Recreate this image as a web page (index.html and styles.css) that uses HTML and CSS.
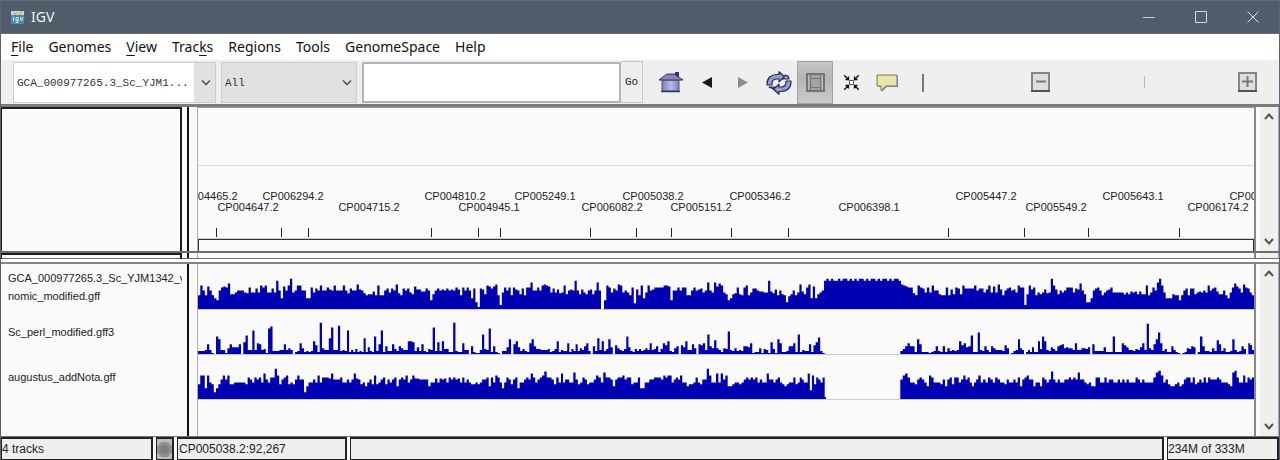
FILE: index.html
```html
<!DOCTYPE html>
<html lang="en">
<head>
<meta charset="utf-8">
<title>IGV</title>
<link rel="stylesheet" href="styles.css">
</head>
<body>
<div class="window">
  <header class="titlebar">
    <svg class="app-icon" width="13" height="13" viewBox="0 0 13 13"><rect width="13" height="13" fill="#4b8da3"/><rect width="13" height="4" fill="#c7dcd3"/><path d="M1 1h2M5 2h2M9 1h3" stroke="#d9a05b"/><path d="M3 3h2M8 3h2" stroke="#5aa070"/><path d="M2.500 6v4M5 6.500h2v3H5zM7 9v2.500H4.500M9 6l1.500 4L12 6" fill="none" stroke="#d5e8ee"/></svg>
    <span class="app-name">IGV</span>
    <div class="window-buttons">
      <button aria-label="Minimize"><svg width="12" height="12" viewBox="0 0 12 12"><path d="M0 6.500h12" stroke="#c3c9cf"/></svg></button>
      <button aria-label="Maximize"><svg width="12" height="12" viewBox="0 0 12 12"><path d="M.5.5h11v11H.5z" fill="none" stroke="#d5d9dd"/></svg></button>
      <button aria-label="Close"><svg width="12" height="12" viewBox="0 0 12 12"><path d="M.5.5l11 11M11.500.5l-11 11" stroke="#dfe2e5"/></svg></button>
    </div>
  </header>
  <nav class="menubar">
    <button><u>F</u>ile</button><button>Genomes</button><button><u>V</u>iew</button><button>Trac<u>k</u>s</button><button>Regions</button><button>Tools</button><button>GenomeSpace</button><button>Help</button>
  </nav>
  <div class="toolbar">
    <div class="combo genome"><select aria-label="Genome"><option>GCA_000977265.3_Sc_YJM1...</option></select><svg class="chevron" width="10" height="6" viewBox="0 0 10 6"><path d="M1 .5l4 4 4-4" fill="none" stroke="#444" stroke-width="1.300"/></svg></div>
    <div class="combo chromosome"><select aria-label="Chromosome"><option>All</option></select><svg class="chevron" width="10" height="6" viewBox="0 0 10 6"><path d="M1 .5l4 4 4-4" fill="none" stroke="#444" stroke-width="1.300"/></svg></div>
    <input class="locus" type="text" aria-label="Locus">
    <button class="go">Go</button>
    <div class="tools">
      <button aria-label="Home"><svg width="26" height="22" viewBox="0 0 26 22"><defs><linearGradient id="wall" x2="1"><stop stop-color="#7c7cb6"/><stop offset=".5" stop-color="#b9b9e6"/><stop offset="1" stop-color="#8080b8"/></linearGradient></defs><path d="M4 8h17v11H4z" fill="url(#wall)" stroke="#55558c"/><path d="M17 0h4v5h-4z" fill="#33336b"/><path d="M1 8L9 2h7l9 6z" fill="#8585bd" stroke="#33335f"/><path d="M3 19.500h19" stroke="#33335f" stroke-width="1.500"/></svg></button>
      <button aria-label="Back"><svg width="10" height="11" viewBox="0 0 10 11"><path d="M0 5.500L10 0v11z" fill="#1a1a1a"/></svg></button>
      <button aria-label="Forward"><svg width="10" height="11" viewBox="0 0 10 11"><path d="M10 5.500L0 0v11z" fill="#8c8c8c"/></svg></button>
      <button aria-label="Refresh"><svg width="26" height="24" viewBox="0 0 26 24"><g fill="#9a9ad2" stroke="#26264f" stroke-width="1.200" stroke-linejoin="round"><path d="M1 13C1 7 5 3.500 11 3.500h2V.8l5.500 5L13 10.800V8h-2c-3 0-5 2-5 5v1H1z"/><path d="M25 11c0 6-4 9.500-10 9.500h-2v2.700l-5.500-5 5.500-5V16h2c3 0 5-2 5-5v-1h5z"/><path d="M3 16h6l-1.500 2zM17 8h6l-1-3-3-1z"/></g></svg></button>
      <button class="pressed" aria-label="Define a region" aria-pressed="true"><svg width="19" height="19" viewBox="0 0 19 19"><path d="M1 1h17v17H1z" fill="#a3a3a3" stroke="#737373" stroke-width="2"/><path d="M4.500 2v15M14.500 2v15M5 5.500h9M5 14.500h9" stroke="#777"/><path d="M2.500 2v15M16.500 2v15" stroke="#bbb"/></svg></button>
      <button aria-label="Fit to window"><svg width="15" height="15" viewBox="0 0 15 15"><path d="M5.500 5.500h4v4h-4z" fill="#fff" stroke="#555"/><path d="M0 0l5 5M15 0l-5 5M0 15l5-5M15 15l-5-5M1.500 4.500h3v-3M13.500 4.500h-3v-3M1.500 10.500h3v3M13.500 10.500h-3v3" fill="none" stroke="#111" stroke-width="1.300"/></svg></button>
      <button aria-label="Popup text"><svg width="23" height="18" viewBox="0 0 23 18"><path d="M2 2h20v11H11l-5 5v-5H2z" fill="#999"/><path d="M1 1h20v11H10l-5 4.500V12H1z" fill="#ece5ab" stroke="#77745e"/></svg></button>
      <button aria-label="Ruler"><svg width="2" height="18" viewBox="0 0 2 18"><path d="M0 0h2v18H0z" fill="#777"/></svg></button>
    </div>
    <div class="zoom">
      <button aria-label="Zoom out"><svg width="19" height="20" viewBox="0 0 19 20"><path d="M1 1h17v18H1z" fill="#dedede" stroke="#858585" stroke-width="2"/><path d="M0 19h19" stroke="#555" stroke-width="2"/><path d="M5 9.500h10" stroke="#777" stroke-width="2"/></svg></button>
      <span class="zoom-mark"></span>
      <button aria-label="Zoom in"><svg width="19" height="20" viewBox="0 0 19 20"><path d="M1 1h17v18H1z" fill="#dedede" stroke="#858585" stroke-width="2"/><path d="M0 19h19" stroke="#555" stroke-width="2"/><path d="M4 9.500h11M9.500 4v11" stroke="#777" stroke-width="2"/></svg></button>
    </div>
  </div>
  <main class="panels">
    <section class="panel header-panel">
      <div class="names boxed"></div>
      <div class="view">
        <div class="cytoband"></div>
        <svg class="ruler" id="ruler" width="100%" height="74"></svg>
        <div class="region-bar"></div>
      </div>
      <div class="scroll"><button aria-label="Scroll header up"><svg width="10" height="7" viewBox="0 0 10 7"><path d="M1 6l4-4.500L9 6" fill="none" stroke="#555" stroke-width="2"/></svg></button><button aria-label="Scroll header down"><svg width="10" height="7" viewBox="0 0 10 7"><path d="M1 1l4 4.500L9 1" fill="none" stroke="#555" stroke-width="2"/></svg></button></div>
    </section>
    <section class="panel strip">
      <div class="names boxed"></div><div class="view"></div><div class="scroll"></div>
    </section>
    <div class="splitter"></div>
    <section class="panel track-panel">
      <div class="names">
        <div class="name"><span>GCA_000977265.3_Sc_YJM1342_v1_ge</span><span>nomic_modified.gff</span></div>
        <div class="name"><span>Sc_perl_modified.gff3</span></div>
        <div class="name"><span>augustus_addNota.gff</span></div>
      </div>
      <div class="view">
        <svg class="track" viewBox="0 0 1056 45" preserveAspectRatio="none"></svg>
        <svg class="track" viewBox="0 0 1056 45" preserveAspectRatio="none"></svg>
        <svg class="track" viewBox="0 0 1056 45" preserveAspectRatio="none"></svg>
      </div>
      <div class="scroll"><button aria-label="Scroll tracks up"><svg width="10" height="7" viewBox="0 0 10 7"><path d="M1 6l4-4.500L9 6" fill="none" stroke="#555" stroke-width="2"/></svg></button><button aria-label="Scroll tracks down"><svg width="10" height="7" viewBox="0 0 10 7"><path d="M1 1l4 4.500L9 1" fill="none" stroke="#555" stroke-width="2"/></svg></button></div>
    </section>
  </main>
  <footer class="status">
    <div class="cell count">4 tracks</div>
    <div class="cell stop"><svg width="15" height="17" viewBox="0 0 17 17"><path d="M5 0h7l5 5v7l-5 5H5l-5-5V5z" fill="#8f8f8f"/><circle cx="8.500" cy="8.500" r="5" fill="#7d7d7d"/></svg></div>
    <div class="cell position">CP005038.2:92,267</div>
    <div class="cell message"></div>
    <div class="cell memory">234M of 333M</div>
  </footer>
</div>
<script src="tracks.js"></script>
</body>
</html>
```
FILE: styles.css
```css
* { box-sizing: border-box; }
body { margin: 0; font-family: "Liberation Sans", Arial, sans-serif; font-size: 12px; color: #222; }
button { border: 0; padding: 0; background: none; font: inherit; color: inherit; display: flex; align-items: center; justify-content: center; }
svg { display: block; flex: none; }

.window { min-height: 100vh; display: flex; flex-direction: column; background: #efefef; border: solid #5c6670; border-width: 0 1px; }
.titlebar { display: flex; align-items: center; height: 34px; padding-left: 10px; background: #505c6a; border-top: 1px solid #5f6b78; border-bottom: 1px solid #65707d; }
.app-name { margin-left: 7px; font: 14px/20px "Noto Sans", sans-serif; color: #f2f4f5; }
.window-buttons { display: flex; margin-left: auto; }
.window-buttons button { width: 52px; height: 32px; }

.menubar { display: flex; gap: 15px; height: 26px; padding-left: 10px; background: #fff; }
.menubar button { font: 14px/26px "Noto Sans", sans-serif; color: #111; display: block; }
.menubar u { text-underline-offset: 3px; }

.toolbar { display: flex; height: 44px; padding-left: 12px; background: #efefef; }
.combo { position: relative; height: 41px; margin-top: 2px; border: 1px solid #ccc; background: #e1e1e1; }
.combo select { appearance: none; width: 100%; height: 100%; border: 0; margin: 0; padding: 0 0 0 3px; background: transparent; font: 11px "Liberation Mono", monospace; color: #333; }
.chevron { position: absolute; right: 4px; top: 17px; pointer-events: none; }
.genome { width: 203px; margin-right: 5px; }
.genome select { width: 180px; background: #fff; }
.chromosome { width: 136px; margin-right: 5px; }
.locus { width: 259px; height: 41px; margin: 2px 0 0; padding: 2px 4px; border: 2px solid #b2b4ba; background: #fff; font: 11px "Liberation Mono", monospace; }
.go { width: 22px; height: 42px; margin-top: 1px; border: solid #c6c6c6; border-width: 1px 1px 1px 0; font: 11px "Liberation Mono", monospace; }
.tools { display: flex; margin-left: 10px; }
.tools button { width: 36px; height: 43px; margin-top: 1px; }
.tools .pressed { background: linear-gradient(#c6c6c6, #b6b6b6 40%, #cacaca); border: 1px solid #a2a2a2; }
.zoom { flex: 1; display: flex; align-items: center; justify-content: space-between; padding: 0 22px 0 90px; }
.zoom-mark { width: 1px; height: 12px; background: #bbb; }

.panels { flex: 1; display: flex; flex-direction: column; border-top: 3px solid #7b7b7b; background: #fafafa; }
.panel { display: flex; }
.names { width: 188px; flex: none; border-right: 2px solid #111; background: #fafafa; }
.boxed { padding-right: 5px; }
.boxed::before { content: ""; display: block; height: 100%; border: 2px solid #1c1c1c; border-left-width: 1px; }
.view { flex: 1; min-width: 0; margin-left: 8px; border: solid #888; border-width: 0 2px 0 1px; border-left-color: #b0b0b0; }
.scroll { width: 19px; flex: none; margin-left: 4px; background: #efefef; display: flex; flex-direction: column; justify-content: space-between; border-right: 1px solid #aaa; }
.scroll button { height: 19px; }
.header-panel .view { border-top: 1px solid #999; }
.cytoband { height: 57px; }
.ruler { border-top: 1px solid #d9d9e0; border-bottom: 1px solid #c9c9d4; font-size: 11px; fill: #222; overflow: hidden; }
.region-bar { height: 12px; border: 1px solid #333; border-bottom-width: 0; }
.strip { height: 8px; border: solid #6d6d6d; border-width: 2px 0 1px; }
.strip .boxed::before { border-bottom: 0; }
.splitter { height: 5px; background: #fff; border-bottom: 2px solid #858585; }
.track-panel { flex: 1; }
.track-panel .names { padding: 0 5px 0 7px; font-size: 11px; line-height: 18px; }
.track-panel .view { padding-top: 1px; }
.name { height: 45px; display: flex; flex-direction: column; justify-content: center; white-space: nowrap; overflow: hidden; }
.track { width: 100%; height: 45px; border-bottom: 1px solid #c9c9d2; }
.track path { fill: #0000b2; }

.status { display: flex; gap: 3px; height: 24px; border-top: 1px solid #777; background: #fafafa; }
.cell { border: solid #222; border-width: 2px 2px 1px 1px; background: #efefef; line-height: 20px; white-space: nowrap; }
.count { width: 152px; }
.stop { width: 18px; background: #bbb; display: flex; align-items: center; justify-content: center; }
.position { width: 170px; padding-left: 1px; }
.message { flex: 1; }
.memory { width: 112px; }
```
FILE: tracks.js
```js
const ORIGIN = 198, SPAN = 1056;
const NS = "http://www.w3.org/2000/svg";
const percent = x => ((x - ORIGIN) / SPAN * 100) + "%";

const ticks = [216, 281, 308, 431, 478, 500, 590, 636, 671, 731, 788, 948, 1024, 1088, 1179];
const contigs = [
  ["CP004465.2", 207, 0], ["CP004647.2", 248, 1], ["CP006294.2", 293, 0], ["CP004715.2", 369, 1],
  ["CP004810.2", 455, 0], ["CP004945.1", 489, 1], ["CP005249.1", 545, 0], ["CP006082.2", 612, 1],
  ["CP005038.2", 653, 0], ["CP005151.2", 701, 1], ["CP005346.2", 760, 0], ["CP006398.1", 869, 1],
  ["CP005447.2", 986, 0], ["CP005549.2", 1056, 1], ["CP005643.1", 1133, 0], ["CP006174.2", 1218, 1],
  ["CP006710.2", 1260, 0]
];
const ruler = document.getElementById("ruler");
for (const x of ticks) {
  const r = document.createElementNS(NS, "rect");
  r.setAttribute("x", percent(x));
  r.setAttribute("y", 62);
  r.setAttribute("width", 1);
  r.setAttribute("height", 9);
  r.setAttribute("shape-rendering", "crispEdges");
  ruler.append(r);
}
for (const [name, x, row] of contigs) {
  const t = document.createElementNS(NS, "text");
  t.setAttribute("x", percent(x));
  t.setAttribute("y", row ? 45 : 34);
  t.setAttribute("text-anchor", "middle");
  t.textContent = name;
  ruler.append(t);
}

// Feature density: [from, one base-36 height per bar]; each run ends where the next begins.
const tracks = [
  [
    [198, "eojenjeb9jmnmqffhjjjhgmhhlhomohhlhtjbnjovhjoojjbbmhljojjmkjojjjojgljjpkjgeffieoeejlhljpgeljlhfnkkiilj9fjljkjljkjmk"],
    [460, "emjmjbl72lkfonlnpe4hmjmemkjflemmrjjmjoponhlhkghofjkjtjfkhfjkfjrj"],
    [601, "0"],
    [604, "9omhljpohjhem6keobhojkmmmmoon9jjmjmmeejmjklhjrjhrnqohf9"],
    [730, "bfgmfemoehlljiihhtigkejfe7dfjehpifmpbnbfhj"],
    [824, "tvtvttvtvvtvtvtvvtvtvvtvtvvtvtvvt"],
    [901, "ponmmgeomlhmhojjfeemekfmlfollllojllhkohnhp"],
    [1000, "kejlmjkhomm4fokmehfhkghvokfjhjmmmhlkqjf77bjlmjehjkmhhhhhfhfihififfoehmjrvohbbbfee9ejlellfhihjhojlmiffjebhmqnlhpmlhe"],
    [1254, ""]
  ],
  [
    [198, "3334a410"], [216, "if4416a777a0"], [243.3, "cj44o4ba451q"], [270.3, "s33344a46402"],
    [297.3, "3b62323d92"], [319.7, "w644gr44t343"], [347, "o2425232g2732"], [374, "i3ao2833a538"],
    [401, "644ddc373a3254"], [432.7, "r3c3d5522w32"],
    [460, "2b44082114"], [482, "k54q28210"], [502, "337f0ad7353"], [527, "2bf8554445235"],
    [556.7, "d2433b253a364"], [584, "8b3083g4d35"], [608.3, "f7096435"], [626.3, "i7325353464b45"],
    [656, "825b9d3268"], [678.7, "097d44a60a9b4"], [707.3, "k86e64265n"],
    [730, "436343887"], [750, "b12261541c51"], [777.3, "fb22388b2"], [797.7, "k2433a29ch31"],
    [824.7, "0"],
    [900.3, "358b882"], [917, "fa222123832"], [942.7, "826343 4d9b78"], [970.7, "j22"], [977.7, "m438428644"],
    [1000, "43960134"], [1018, "f64024272 2d5"], [1042, "id4375389a6766"], [1072.7, "4b4466570"],
    [1092.3, "a33337222"], [1112.7, "i222b974435 47b4"], [1146.7, "v64af"], [1158, "mb352284210126587 02"],
    [1200, "i833263"], [1216.7, "ea36223"], [1232.3, "f423850"], [1248.3, "b94"], [1254, ""]
  ],
  [
    [198, "foobohf7bfkokoffhhhhhfmkhmkmhqkhmm"], [274.7, "vofkmofhfkokk"], [304, "7dhhkhohmmml"],
    [331, "qkkkmhhkhk"], [353.7, "qlkfhdhkfofh"], [380.7, "kmfkhkmdkmkohk"], [412.3, "ollkkkkdhhlhlklhmkmkl"],
    [460, "hmhkhffhfhkkmdmh"], [495.3, "omhbhmkfkmbhhkmk"], [530.7, "qmhkmo"], [544.3, "smmkfmh"],
    [561, "qhkkhh"], [573.3, "rkfhmkfhhk"], [596, "omh"], [603.3, "rmmkdkmm"], [622.3, "okmmfhhmb"],
    [642.3, "bhhkkmmmk"], [663.3, "omoohkmk"], [680, "ohhdffhmhfkk"], [706.7, "vohhqhqkod"],
    [730, "dfhhfhkmkmkmhkhh"], [766.7, "qkkhkmhfdfhhmf"], [797.7, "hmkhh"], [807.7, "q9ofmkhm"],
    [824.7, "2"], [826, "0"],
    [900.3, "koqm"], [910, "hhfkmkhd"], [929, "omhhhfk"], [945, "dkmfmmhk"], [963.3, "okmhdhk"], [978.3, "ohkhmkhmk"],
    [1000, "hhfkhhkhmdkm"], [1026.7, "okkdhhdmkhk"], [1051, "skhkhhkkmkmk"], [1077.7, "rkkhfhddmm"],
    [1100, "hhmhkkhhkhkhkhhhmkhkhhhh"], [1153.3, "mrto"], [1163.3, "hkfddfhd"],
    [1181.7, "fkmmhmfhkhmhmkkkmkhhhfd"], [1232.3, "rtmhhohmkm"], [1254, ""]
  ]
];

document.querySelectorAll(".track").forEach((svg, i) => {
  let d = "M0 45";
  const runs = tracks[i];
  for (let k = 0; k < runs.length - 1; k++) {
    const from = runs[k][0] - ORIGIN, to = runs[k + 1][0] - ORIGIN;
    const bars = runs[k][1].replace(/ /g, "");
    const step = (to - from) / bars.length;
    [...bars].forEach((c, n) => {
      d += `V${45 - parseInt(c, 36)}H${(from + (n + 1) * step).toFixed(2)}`;
    });
  }
  const path = document.createElementNS(NS, "path");
  path.setAttribute("d", d + "V45z");
  svg.append(path);
});
```
